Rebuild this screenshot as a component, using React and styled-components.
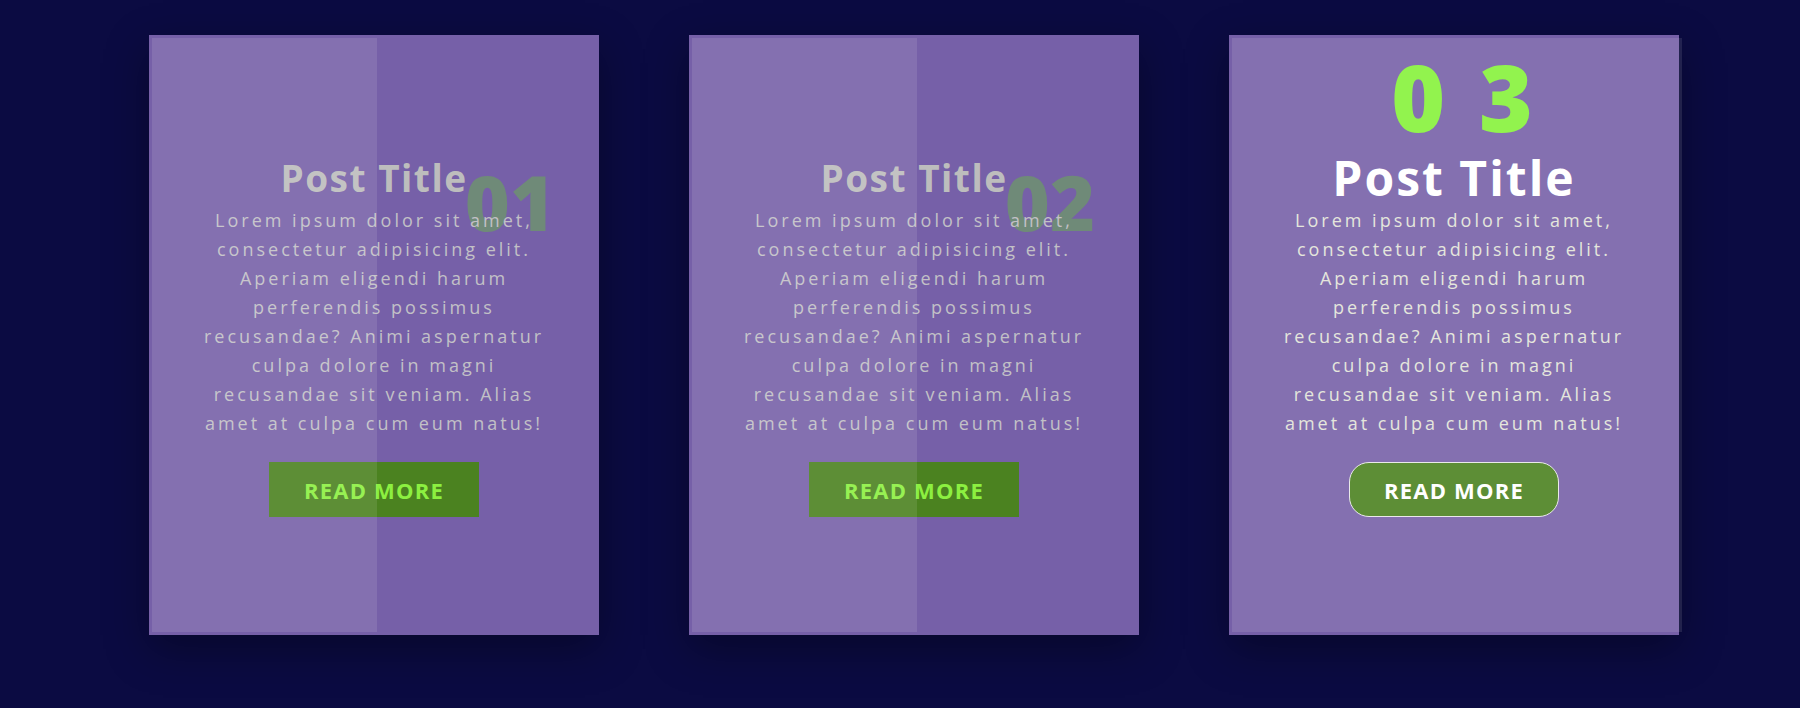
import React from "react";
import styled, { createGlobalStyle } from "styled-components";

const Global = createGlobalStyle`
  html, body {
    margin: 0;
    padding: 0;
    background: #0b0b42;
  }
  body {
    font-family: "Open Sans", "Noto Sans", sans-serif;
  }
`;

const Page = styled.main`
  min-height: 708px;
  box-sizing: border-box;
  padding: 35px 0 0 149px;
  display: flex;
  align-items: flex-start;
  gap: 90px;
  background: #0b0b42;
`;

const Card = styled.article`
  position: relative;
  width: 450px;
  height: 600px;
  flex: none;
  background: #7660a8;
  box-shadow: 0 14px 40px rgba(0, 0, 0, 0.35);
`;

const Sheen = styled.div`
  position: absolute;
  top: 3px;
  left: 3px;
  bottom: 3px;
  width: ${(p) => (p.$active ? "450px" : "225px")};
  background: rgba(255, 255, 255, 0.1);
  pointer-events: none;
  z-index: 3;
`;

const Number = styled.span`
  position: absolute;
  z-index: 1;
  top: ${(p) => (p.$active ? "16px" : "128px")};
  right: ${(p) => (p.$active ? "112px" : "44px")};
  font-family: "Open Sans", sans-serif;
  font-weight: 800;
  font-size: ${(p) => (p.$active ? "92px" : "77px")};
  line-height: 1;
  letter-spacing: ${(p) => (p.$active ? "34px" : "0px")};
  color: ${(p) => (p.$active ? "#86f23a" : "#6f8a78")};
`;

const Content = styled.div`
  position: relative;
  z-index: 2;
  box-sizing: border-box;
  padding-top: 107px;
  display: flex;
  flex-direction: column;
  align-items: center;
  text-align: center;
`;

const TitleSlot = styled.div`
  height: 64px;
  display: flex;
  align-items: flex-end;
  justify-content: center;
`;

const Title = styled.h2`
  margin: 0 0 ${(p) => (p.$active ? "4px" : "10px")} 0;
  font-family: "Open Sans", sans-serif;
  font-weight: 700;
  font-size: ${(p) => (p.$active ? "48px" : "37px")};
  line-height: 1;
  letter-spacing: ${(p) => (p.$active ? "2px" : "1.5px")};
  color: ${(p) => (p.$active ? "#ffffff" : "#bdbdbd")};
`;

const Body = styled.p`
  margin: 0;
  font-family: "Open Sans", sans-serif;
  font-weight: 400;
  font-size: 18px;
  line-height: 29px;
  letter-spacing: 3px;
  white-space: nowrap;
  color: ${(p) => (p.$active ? "#e2e4d8" : "#c2c0c6")};
`;

const Button = styled.a`
  box-sizing: border-box;
  margin-top: 24px;
  width: 210px;
  height: 55px;
  display: flex;
  align-items: center;
  justify-content: center;
  text-decoration: none;
  font-family: "Open Sans", sans-serif;
  font-weight: 700;
  font-size: 22px;
  letter-spacing: 1.2px;
  background: #4b8220;
  color: ${(p) => (p.$active ? "#ffffff" : "#8cf040")};
  border: ${(p) => (p.$active ? "1px solid #e8e8e8" : "none")};
  border-radius: ${(p) => (p.$active ? "20px" : "0")};
`;

const lines = [
  "Lorem ipsum dolor sit amet,",
  "consectetur adipisicing elit.",
  "Aperiam eligendi harum",
  "perferendis possimus",
  "recusandae? Animi aspernatur",
  "culpa dolore in magni",
  "recusandae sit veniam. Alias",
  "amet at culpa cum eum natus!",
];

const posts = [
  { num: "01", active: false },
  { num: "02", active: false },
  { num: "03", active: true },
];

function PostCard({ num, active }) {
  return (
    <Card>
      <Number $active={active}>{num}</Number>
      <Content>
        <TitleSlot>
          <Title $active={active}>Post Title</Title>
        </TitleSlot>
        <Body $active={active}>
          {lines.map((l, i) => (
            <React.Fragment key={i}>
              {l}
              {i < lines.length - 1 && <br />}
            </React.Fragment>
          ))}
        </Body>
        <Button href="#" $active={active}>
          READ MORE
        </Button>
      </Content>
      <Sheen $active={active} />
    </Card>
  );
}

export default function App() {
  return (
    <>
      <Global />
      <Page>
        {posts.map((p) => (
          <PostCard key={p.num} num={p.num} active={p.active} />
        ))}
      </Page>
    </>
  );
}
